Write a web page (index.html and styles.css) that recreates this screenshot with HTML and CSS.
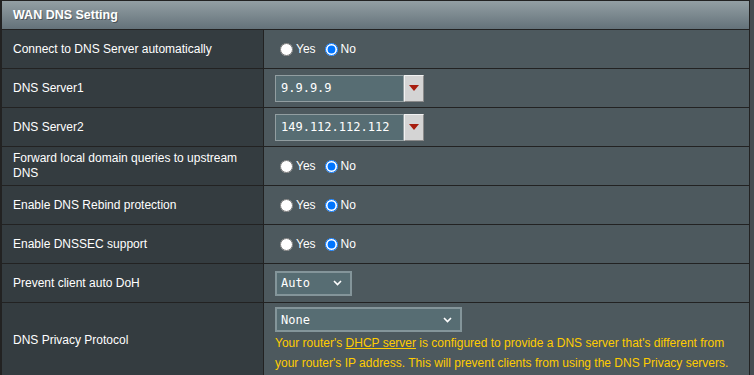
FILE: index.html
```html
<!DOCTYPE html>
<html lang="en">
<head>
    <meta charset="UTF-8">
    <meta name="viewport" content="width=device-width, initial-scale=1.0">
    <title>WAN DNS Setting</title>
    <link rel="stylesheet" href="styles.css">
</head>
<body>
    <div class="panel">
        <div class="panel-head">WAN DNS Setting</div>

        <div class="label">Connect to DNS Server automatically</div>
        <div class="field">
            <label><input type="radio" name="dnsAuto">Yes</label>
            <label><input type="radio" name="dnsAuto" checked>No</label>
        </div>

        <div class="label">DNS Server1</div>
        <div class="field">
            <div class="combo">
                <input type="text" class="input-text" value="9.9.9.9">
                <button class="drop-btn"><span class="arrow"></span></button>
            </div>
        </div>

        <div class="label">DNS Server2</div>
        <div class="field">
            <div class="combo">
                <input type="text" class="input-text" value="149.112.112.112">
                <button class="drop-btn"><span class="arrow"></span></button>
            </div>
        </div>

        <div class="label">Forward local domain queries to upstream DNS</div>
        <div class="field">
            <label><input type="radio" name="dnsFwd">Yes</label>
            <label><input type="radio" name="dnsFwd" checked>No</label>
        </div>

        <div class="label">Enable DNS Rebind protection</div>
        <div class="field">
            <label><input type="radio" name="dnsRebind">Yes</label>
            <label><input type="radio" name="dnsRebind" checked>No</label>
        </div>

        <div class="label">Enable DNSSEC support</div>
        <div class="field">
            <label><input type="radio" name="dnssec">Yes</label>
            <label><input type="radio" name="dnssec" checked>No</label>
        </div>

        <div class="label">Prevent client auto DoH</div>
        <div class="field">
            <div class="select select-auto">
                <span>Auto</span>
                <svg width="9" height="6" viewBox="0 0 9 6"><polyline points="1,1 4.5,4.5 8,1" fill="none" stroke="#fff" stroke-width="1.6"/></svg>
            </div>
        </div>

        <div class="label">DNS Privacy Protocol</div>
        <div class="field field-stack">
            <div class="select select-none">
                <span>None</span>
                <svg width="9" height="6" viewBox="0 0 9 6"><polyline points="1,1 4.5,4.5 8,1" fill="none" stroke="#fff" stroke-width="1.6"/></svg>
            </div>
            <div class="hint">Your router's <a href="#">DHCP server</a> is configured to provide a DNS server that's different from your router's IP address. This will prevent clients from using the DNS Privacy servers.</div>
        </div>
    </div>
</body>
</html>
```

FILE: styles.css
```css
body {
    margin: 0;
    background-color: #454d52;
    font-family: "Liberation Sans", Arial, sans-serif;
    font-size: 12px;
    color: #fff;
}
.panel {
    width: 750px;
    box-sizing: border-box;
    display: grid;
    grid-template-columns: 261px 485px;
    grid-template-rows: 28px;
    grid-auto-rows: minmax(38px, auto);
    gap: 1px;
    background-color: #222;
    border: 1px solid #222;
    border-left-width: 2px;
}
.panel-head {
    grid-column: 1 / -1;
    display: flex;
    align-items: center;
    padding-left: 11px;
    font-size: 12.5px;
    font-weight: bold;
    text-shadow: 1px 1px 0 rgba(0, 0, 0, 0.35);
    background: linear-gradient(#939fa4, #64727a);
}
.label {
    display: flex;
    align-items: center;
    padding: 0 10px 0 11px;
    line-height: 15px;
    background-color: #343c40;
}
.field {
    display: flex;
    align-items: center;
    padding: 0 10px 0 11px;
    background-color: #4d595e;
}
.field label {
    display: inline-flex;
    align-items: center;
    margin-right: 4px;
}
.field input[type="radio"] {
    margin: 0 3px 0 5px;
    width: 13px;
    height: 13px;
}
.combo {
    display: flex;
}
.input-text {
    width: 129px;
    height: 27px;
    box-sizing: border-box;
    margin: 0;
    padding: 0 5px;
    border: 1px solid #929ea1;
    background-color: #576d73;
    color: #fff;
    font-family: "DejaVu Sans Mono", "Liberation Mono", monospace;
    font-size: 12px;
}
.drop-btn {
    width: 20px;
    height: 27px;
    margin: 0;
    padding: 0;
    display: flex;
    align-items: center;
    justify-content: center;
    box-sizing: border-box;
    background-color: #d4d4d4;
    border: 1px solid;
    border-color: #f2f2f2 #8a8a8a #8a8a8a #f2f2f2;
}
.arrow {
    width: 0;
    height: 0;
    border-left: 5px solid transparent;
    border-right: 5px solid transparent;
    border-top: 6px solid #a81d0e;
}
.select {
    height: 25px;
    box-sizing: border-box;
    display: flex;
    align-items: center;
    justify-content: space-between;
    padding: 0 8px 0 4px;
    border: 2px solid #84959a;
    background-color: #576d73;
    font-family: "DejaVu Sans Mono", "Liberation Mono", monospace;
    font-size: 12px;
}
.select-auto {
    width: 77px;
}
.select-none {
    width: 187px;
}
.field-stack {
    flex-direction: column;
    align-items: flex-start;
    padding-top: 4px;
    padding-bottom: 4px;
}
.hint {
    margin-top: 1px;
    line-height: 20px;
    color: #ffcc00;
}
.hint a {
    color: #ffcc00;
}
```
